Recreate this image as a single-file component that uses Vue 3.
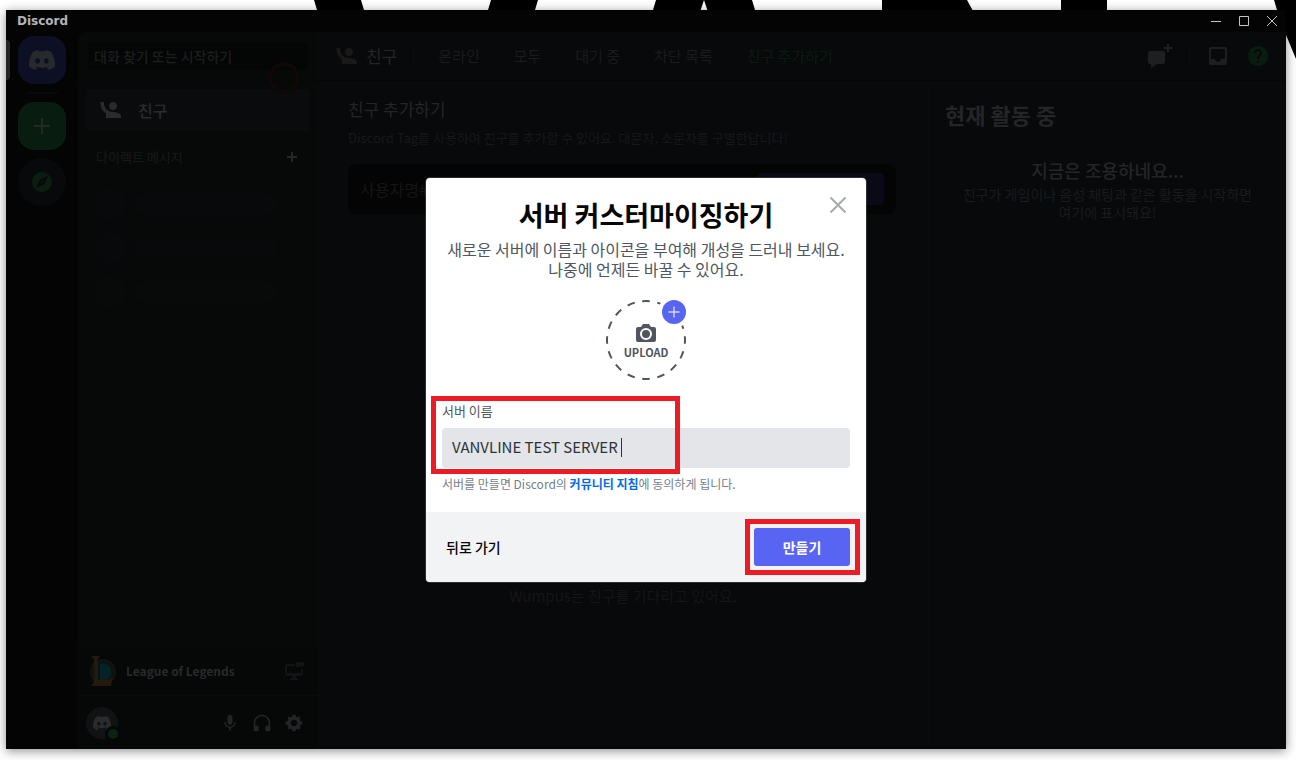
<template>
  <div class="desktop">
    <svg class="backdrop" viewBox="0 0 1296 60" preserveAspectRatio="none" aria-hidden="true">
      <path d="M314 0H361L379 60H332ZM491 0H538L520 60H473ZM656 0H752L770 60H724L704 0L684 60H638ZM882 0H967L1000 60H882ZM1061 0H1107V60H1061ZM1274 0H1296V59L1286 35L1277 10Z" />
    </svg>

    <div class="window">
      <header class="titlebar">
        <span class="wordmark">Discord</span>
        <div class="win-btns">
          <button aria-label="최소화"><svg viewBox="0 0 12 12"><path d="M1 6.5H11" /></svg></button>
          <button aria-label="최대화"><svg viewBox="0 0 12 12"><path d="M1.5 1.5H10.5V10.5H1.5Z" /></svg></button>
          <button aria-label="닫기"><svg viewBox="0 0 12 12"><path d="M1 1L11 11M11 1L1 11" /></svg></button>
        </div>
      </header>

      <div class="body">
        <nav class="rail">
          <button class="guild home" aria-label="홈">
            <svg width="28" height="20" viewBox="0 0 28 20"><path :d="icons.logo" /></svg>
          </button>
          <div class="rail-line"></div>
          <button class="guild add" aria-label="서버 추가하기">
            <svg width="24" height="24" viewBox="0 0 24 24"><path d="M11 4H13V11H20V13H13V20H11V13H4V11H11Z" /></svg>
          </button>
          <button class="guild explore" aria-label="공개 서버 살펴보기">
            <svg width="24" height="24" viewBox="0 0 24 24"><path :d="icons.compass" /></svg>
          </button>
        </nav>

        <aside class="sidebar">
          <div class="search-wrap">
            <button class="search">대화 찾기 또는 시작하기</button>
            <i class="click-ring"></i>
          </div>
          <div class="dm">
            <a class="friends-link" href="#">
              <svg width="24" height="24" viewBox="0 0 24 24"><path transform="translate(2 4)" :d="icons.friends" /></svg>
              친구
            </a>
            <div class="dm-head">
              <span>다이렉트 메시지</span>
              <button aria-label="DM 생성"><svg width="12" height="12" viewBox="0 0 12 12"><path d="M5 1H7V5H11V7H7V11H5V7H1V5H5Z" /></svg></button>
            </div>
            <div v-for="n in 3" :key="n" class="ghost" :class="'g' + n"><i></i><b></b></div>
          </div>
          <div class="activity">
            <svg class="lol" width="32" height="32" viewBox="0 0 32 32">
              <circle cx="17" cy="17" r="12" fill="#04161a" stroke="#17130c" stroke-width="2" />
              <path d="M14 9C20 8 25 11 25 17C25 21 23 24 20 25H14Z" fill="#052326" />
              <path d="M5 1H14L12 4V25H22L27 22L25 31H5L8 27V4Z" fill="#24190b" />
            </svg>
            <strong>League of Legends</strong>
            <button aria-label="화면 공유">
              <svg width="20" height="20" viewBox="0 0 20 20"><path d="M3 3H11V5H3V12H17V8H19V13A2 2 0 0 1 17 15H12V17H14V19H6V17H8V15H3A2 2 0 0 1 1 13V5A2 2 0 0 1 3 3ZM13 1H17A1 1 0 0 1 18 2L20 1V6L18 5A1 1 0 0 1 17 6H13A1 1 0 0 1 12 5V2A1 1 0 0 1 13 1Z" /></svg>
            </button>
          </div>
          <div class="user">
            <div class="avatar">
              <svg width="20" height="14" viewBox="0 0 28 20"><path :d="icons.logo" /></svg>
              <i class="status"></i>
            </div>
            <button aria-label="음소거"><svg width="20" height="20" viewBox="0 0 24 24"><path :d="icons.mic" /></svg></button>
            <button aria-label="헤드셋 음소거"><svg width="20" height="20" viewBox="0 0 24 24"><path :d="icons.headset" /></svg></button>
            <button aria-label="사용자 설정"><svg width="20" height="20" viewBox="0 0 24 24"><path :d="icons.gear" /></svg></button>
          </div>
        </aside>

        <section class="content">
          <div class="toolbar">
            <svg class="tool-icon" width="24" height="24" viewBox="0 0 24 24"><path transform="translate(2 4)" :d="icons.friends" /></svg>
            <h1>친구</h1>
            <i class="vline"></i>
            <div class="tabs">
              <button v-for="t in tabs" :key="t" :class="{ green: t === '친구 추가하기' }">{{ t }}</button>
            </div>
            <div class="tools">
              <button aria-label="그룹 DM 생성"><svg width="26" height="24" viewBox="0 0 26 24"><path d="M3 7H16A2 2 0 0 1 18 9V18A2 2 0 0 1 16 20H10L4 24V20H3A2 2 0 0 1 1 18V9A2 2 0 0 1 3 7ZM20 0H22V3H25V5H22V8H20V5H17V3H20Z" /></svg></button>
              <i class="vline"></i>
              <button aria-label="받은 편지함"><svg width="24" height="24" viewBox="0 0 24 24"><path :d="icons.inbox" /></svg></button>
              <button class="help" aria-label="도움말"><svg width="24" height="24" viewBox="0 0 24 24"><path :d="icons.help" /></svg></button>
            </div>
          </div>

          <div class="columns">
            <main class="people">
              <div class="add-friend">
                <h2>친구 추가하기</h2>
                <p>Discord Tag를 사용하여 친구를 추가할 수 있어요. 대문자, 소문자를 구별한답니다!</p>
                <div class="add-box">
                  <input type="text" placeholder="사용자명#0000" aria-label="사용자명" />
                  <button aria-label="친구 요청 보내기"></button>
                </div>
              </div>
              <div class="empty">
                <p>Wumpus는 친구를 기다리고 있어요.</p>
              </div>
            </main>
            <aside class="now">
              <h2>현재 활동 중</h2>
              <h3>지금은 조용하네요...</h3>
              <p>친구가 게임이나 음성 채팅과 같은 활동을 시작하면 여기에 표시돼요!</p>
            </aside>
          </div>
        </section>
      </div>

      <div class="layer">
        <form class="modal" role="dialog" aria-labelledby="modal-title" @submit.prevent>
          <button type="button" class="close" aria-label="닫기">
            <svg width="24" height="24" viewBox="0 0 24 24"><path d="M4.5 4.5L19.5 19.5M19.5 4.5L4.5 19.5" /></svg>
          </button>
          <div class="modal-body">
            <h2 id="modal-title">서버 커스터마이징하기</h2>
            <p class="desc">새로운 서버에 이름과 아이콘을 부여해 개성을 드러내 보세요.<br />나중에 언제든 바꿀 수 있어요.</p>
            <button type="button" class="upload">
              <svg class="ring" width="80" height="80" viewBox="0 0 80 80">
                <circle cx="40" cy="40" r="39" pathLength="160" fill="none" stroke="#4f5660" stroke-width="2" stroke-dasharray="5 5" stroke-dashoffset="2.5" />
                <circle cx="68" cy="12" r="16" fill="#fff" />
                <circle cx="68" cy="12" r="12" fill="#5865f2" />
                <path d="M68 6.5V17.5M62.5 12H73.5" stroke="#d5d8fc" stroke-width="1.4" />
              </svg>
              <svg width="20" height="18" viewBox="0 0 20 18">
                <path fill="#4f5660" fill-rule="evenodd" d="M7 0H13L15 3H18A2 2 0 0 1 20 5V16A2 2 0 0 1 18 18H2A2 2 0 0 1 0 16V5A2 2 0 0 1 2 3H5ZM10 4A6 6 0 1 0 10 16A6 6 0 1 0 10 4ZM10 6A4 4 0 1 1 10 14A4 4 0 1 1 10 6Z" />
              </svg>
              <span>UPLOAD</span>
            </button>
            <div class="field">
              <label for="server-name">서버 이름</label>
              <input id="server-name" v-model="serverName" type="text" />
              <i class="caret"></i>
              <i class="mark mark-field"></i>
            </div>
            <p class="hint">서버를 만들면 Discord의 <a href="#">커뮤니티 지침</a>에 동의하게 됩니다.</p>
          </div>
          <footer class="modal-foot">
            <button type="button" class="back">뒤로 가기</button>
            <div class="submit-wrap">
              <button type="submit" class="submit">만들기</button>
              <i class="mark mark-submit"></i>
            </div>
          </footer>
        </form>
      </div>
    </div>
  </div>
</template>

<script setup>
import { ref } from 'vue'

const serverName = ref('VANVLINE TEST SERVER')
const tabs = ['온라인', '모두', '대기 중', '차단 목록', '친구 추가하기']

const icons = {
  logo: 'M23.0212 1.67671C21.3107 0.879656 19.5079 0.318797 17.6584 0C17.4062 0.461742 17.1749 0.934541 16.9708 1.4184C15.003 1.12145 12.9974 1.12145 11.0283 1.4184C10.819 0.934541 10.589 0.461744 10.3368 0.00546311C8.48074 0.324393 6.67795 0.885118 4.96746 1.68231C1.56727 6.77853 0.649666 11.7538 1.11108 16.652C3.10102 18.1418 5.3262 19.2743 7.69177 20C8.22338 19.2743 8.69519 18.4993 9.09812 17.691C8.32996 17.3997 7.58522 17.0424 6.87684 16.6135C7.06531 16.4762 7.24726 16.3387 7.42403 16.1847C11.5911 18.1749 16.408 18.1749 20.5763 16.1847C20.7531 16.3332 20.9351 16.4762 21.1171 16.6135C20.41 17.0369 19.6639 17.3997 18.897 17.691C19.3052 18.4993 19.7718 19.2689 20.3021 19.9945C22.6677 19.2689 24.8929 18.1364 26.8828 16.6466H26.8893C27.43 10.9731 25.9665 6.04728 23.0212 1.67671ZM9.68041 13.6383C8.39754 13.6383 7.34085 12.4453 7.34085 10.994C7.34085 9.54272 8.37155 8.34973 9.68041 8.34973C10.9893 8.34973 12.0395 9.54272 12.0187 10.994C12.0187 12.4453 10.9828 13.6383 9.68041 13.6383ZM18.3161 13.6383C17.0333 13.6383 15.9765 12.4453 15.9765 10.994C15.9765 9.54272 17.0124 8.34973 18.3161 8.34973C19.6184 8.34973 20.6751 9.54272 20.6543 10.994C20.6543 12.4453 19.6184 13.6383 18.3161 13.6383Z',
  friends: 'M0.5 0V1.5C0.5 5.65 2.71 9.28 6 11.3V16H21V14C21 11.34 15.67 10 13 10H12.75C8 10 4 6 4 1.5V0ZM13 0C10.79 0 9 1.79 9 4C9 6.21 10.79 8 13 8C15.21 8 17 6.21 17 4C17 1.79 15.21 0 13 0Z',
  compass: 'M12 10.9c-.61 0-1.1.49-1.1 1.1s.49 1.1 1.1 1.1c.61 0 1.1-.49 1.1-1.1s-.49-1.1-1.1-1.1zM12 2C6.48 2 2 6.48 2 12s4.48 10 10 10 10-4.48 10-10S17.52 2 12 2zm2.19 12.19L6 18l3.81-8.19L18 6l-3.81 8.19z',
  mic: 'M14.99 11C14.99 12.66 13.66 14 12 14C10.34 14 9 12.66 9 11V5C9 3.34 10.34 2 12 2C13.66 2 15 3.34 15 5L14.99 11ZM12 16.1C14.76 16.1 17.3 14 17.3 11H19C19 14.42 16.28 17.24 13 17.72V21H11V17.72C7.72 17.23 5 14.41 5 11H6.7C6.7 14 9.24 16.1 12 16.1Z',
  headset: 'M12 2C6.486 2 2 6.488 2 12V20C2 21.107 2.895 22 4 22H6C7.104 22 8 21.107 8 20V17C8 15.899 7.104 15 6 15H4V12C4 7.591 7.589 4 12 4C16.411 4 20 7.591 20 12V15H18C16.896 15 16 15.899 16 17V20C16 21.107 16.896 22 18 22H20C21.104 22 22 21.107 22 20V12C22 6.488 17.514 2 12 2Z',
  gear: 'M19.738 10H22V14H19.739C19.498 14.931 19.1 15.798 18.565 16.564L20 18L18 20L16.565 18.564C15.797 19.099 14.932 19.498 14 19.738V22H10V19.738C9.069 19.498 8.203 19.099 7.436 18.564L6 20L4 18L5.436 16.564C4.901 15.799 4.502 14.932 4.262 14H2V10H4.262C4.502 9.068 4.9 8.202 5.436 7.436L4 6L6 4L7.436 5.436C8.202 4.9 9.068 4.502 10 4.262V2H14V4.261C14.932 4.502 15.797 4.9 16.565 5.435L18 3.999L20 5.999L18.564 7.436C19.099 8.202 19.498 9.069 19.738 10ZM12 16C14.209 16 16 14.209 16 12C16 9.791 14.209 8 12 8C9.791 8 8 9.791 8 12C8 14.209 9.791 16 12 16Z',
  inbox: 'M19 3H4.99C3.88 3 3.01 3.89 3.01 5L3 19C3 20.1 3.88 21 4.99 21H19C20.1 21 21 20.1 21 19V5C21 3.89 20.1 3 19 3ZM19 15H15C15 16.66 13.65 18 12 18C10.35 18 9 16.66 9 15H4.99V5H19V15Z',
  help: 'M12 2C6.48 2 2 6.48 2 12s4.48 10 10 10 10-4.48 10-10S17.52 2 12 2zm1 17h-2v-2h2v2zm2.07-7.75l-.9.92C13.45 12.9 13 13.5 13 15h-2v-.5c0-1.1.45-2.1 1.17-2.83l1.24-1.26c.37-.36.59-.86.59-1.41 0-1.1-.9-2-2-2s-2 .9-2 2H8c0-2.21 1.79-4 4-4s4 1.79 4 4c0 .88-.36 1.68-.93 2.25z'
}
</script>

<style>
body {
  margin: 0;
  background: #fff;
}
</style>

<style scoped>
.desktop {
  position: relative;
  box-sizing: border-box;
  min-height: 100vh;
  padding: 10px 10px 11px 6px;
  display: flex;
  overflow: hidden;
  font-family: "Noto Sans CJK KR", sans-serif;
  font-size: 16px;
  line-height: 20px;
  color: #242526;
}
.desktop * {
  box-sizing: border-box;
}
h1, h2, h3, p {
  margin: 0;
  font-weight: 400;
}
button {
  border: 0;
  padding: 0;
  background: none;
  font: inherit;
  color: inherit;
  cursor: pointer;
}
input {
  border: 0;
  font: inherit;
  outline: none;
}
svg {
  display: block;
  fill: currentColor;
}
.backdrop {
  position: absolute;
  top: 0;
  left: 0;
  width: 100%;
  height: 60px;
  fill: #000;
}
.window {
  position: relative;
  flex: 1;
  min-width: 0;
  display: flex;
  flex-direction: column;
  background: #040404;
  box-shadow: 0 2px 10px rgba(0, 0, 0, 0.45);
}

.titlebar {
  height: 22px;
  display: flex;
  align-items: center;
  justify-content: space-between;
  padding: 0 8px 0 11px;
  background: #040404;
  color: #b4b5b7;
}
.wordmark {
  font: 700 12px/22px "DejaVu Sans", sans-serif;
}
.win-btns {
  display: flex;
  gap: 16px;
}
.win-btns svg {
  width: 12px;
  height: 12px;
  fill: none;
  stroke: #c4c4c4;
}

.body {
  flex: 1;
  display: flex;
  min-height: 0;
}
.rail {
  width: 72px;
  display: flex;
  flex-direction: column;
  align-items: center;
  gap: 8px;
  padding-top: 4px;
}
.guild {
  width: 48px;
  height: 48px;
  border-radius: 16px;
  display: flex;
  align-items: center;
  justify-content: center;
}
.home {
  position: relative;
  background: #0d0f24;
  color: #28292b;
}
.home::before {
  content: "";
  position: absolute;
  left: -12px;
  top: 4px;
  width: 4px;
  height: 40px;
  border-radius: 0 4px 4px 0;
  background: #262626;
}
.rail-line {
  width: 32px;
  height: 2px;
  background: #08090a;
}
.add {
  background: #091c10;
  color: #262827;
}
.explore {
  border-radius: 24px;
  background: #08090b;
  color: #091e11;
}

.sidebar {
  width: 240px;
  display: flex;
  flex-direction: column;
  background: #070908;
  border-radius: 8px 0 0 0;
}
.search-wrap {
  position: relative;
  height: 49px;
  padding: 10px;
  border-bottom: 1px solid #050606;
}
.search {
  width: 100%;
  height: 28px;
  padding: 0 6px;
  border-radius: 4px;
  background: #040505;
  color: #1d1e1f;
  font-size: 14px;
  font-weight: 500;
  line-height: 26px;
  text-align: left;
}
.click-ring {
  position: absolute;
  left: 190px;
  top: 30px;
  width: 32px;
  height: 32px;
  border: 4px solid #0e0806;
  border-radius: 50%;
}
.dm {
  flex: 1;
  padding: 8px;
}
.friends-link {
  height: 42px;
  padding: 0 12px;
  display: flex;
  align-items: center;
  gap: 16px;
  border-radius: 4px;
  background: #0a0b0d;
  color: #2a2b2c;
  font-weight: 500;
  text-decoration: none;
}
.dm-head {
  display: flex;
  align-items: center;
  justify-content: space-between;
  padding: 16px 12px 15px 10px;
  color: #18191a;
  font-size: 13px;
}
.dm-head button {
  color: #242526;
}
.ghost {
  height: 44px;
  padding: 0 8px;
  display: flex;
  align-items: center;
  gap: 8px;
}
.ghost i {
  width: 32px;
  height: 32px;
  border-radius: 50%;
  background: #08090b;
}
.ghost b {
  width: 144px;
  height: 20px;
  border-radius: 10px;
  background: #08090b;
}
.g3 i,
.g3 b {
  background: #080a09;
}
.activity {
  height: 49px;
  padding: 0 14px 0 8px;
  display: flex;
  align-items: center;
  gap: 8px;
  background: #060707;
  border-bottom: 1px solid #0a0b0b;
}
.activity strong {
  flex: 1;
  color: #28292a;
  font-size: 12px;
}
.activity button {
  color: #121314;
}
.user {
  height: 53px;
  padding: 0 8px;
  display: flex;
  align-items: center;
  background: #060707;
}
.user button {
  width: 32px;
  height: 32px;
  display: flex;
  align-items: center;
  justify-content: center;
  color: #232425;
}
.avatar {
  position: relative;
  width: 32px;
  height: 32px;
  margin-right: auto;
  border-radius: 50%;
  background: #111214;
  color: #2a2b2c;
  display: flex;
  align-items: center;
  justify-content: center;
}
.status {
  position: absolute;
  right: -3px;
  bottom: -3px;
  width: 16px;
  height: 16px;
  border: 3px solid #060707;
  border-radius: 50%;
  background: #0a2412;
}

.content {
  flex: 1;
  min-width: 0;
  display: flex;
  flex-direction: column;
  background: #08090b;
}
.toolbar {
  height: 49px;
  padding: 0 16px;
  display: flex;
  align-items: center;
  border-bottom: 1px solid #050607;
}
.tool-icon {
  color: #19191a;
}
.toolbar h1 {
  margin-left: 8px;
  font-size: 17px;
}
.vline {
  width: 1px;
  height: 24px;
  margin: 0 16px;
  background: #0c0d0f;
}
.tabs {
  display: flex;
  gap: 34px;
  margin-left: 8px;
  color: #1a1b1c;
  font-size: 15px;
}
.green,
.help {
  color: #091c10;
}
.tools {
  display: flex;
  align-items: center;
  margin-left: auto;
  color: #1e1f20;
}
.help {
  margin-left: 16px;
}
.columns {
  flex: 1;
  display: flex;
}
.people {
  flex: 1;
  display: flex;
  flex-direction: column;
}
.add-friend {
  padding: 18px 32px 20px 30px;
  border-bottom: 1px solid #0a0b0d;
}
.add-friend h2 {
  font-size: 17px;
}
.add-friend p {
  margin-top: 9px;
  color: #171819;
  font-size: 13px;
}
.add-box {
  height: 50px;
  margin-top: 16px;
  padding: 0 12px;
  display: flex;
  align-items: center;
  border-radius: 8px;
  background: #040404;
}
.add-box input {
  flex: 1;
  min-width: 0;
  padding: 0;
  background: none;
}
.add-box input::placeholder {
  color: #151616;
  opacity: 1;
}
.add-box button {
  width: 126px;
  height: 32px;
  border-radius: 4px;
  background: #090a16;
}
.empty {
  flex: 1;
  display: flex;
  align-items: center;
  justify-content: center;
}
.empty p {
  padding-top: 208px;
  color: #151616;
  font-size: 15px;
}
.now {
  width: 358px;
  padding: 23px 16px;
  border-left: 1px solid #0a0b0d;
  text-align: center;
}
.now h2 {
  font-size: 22px;
  font-weight: 700;
  text-align: left;
}
.now h3 {
  margin-top: 36px;
  font-size: 18px;
  font-weight: 500;
}
.now p {
  margin-top: 5px;
  padding: 0 16px;
  color: #1a1b1c;
  font-size: 14px;
  line-height: 18px;
  word-break: keep-all;
}

.layer {
  position: absolute;
  inset: 0;
  display: flex;
  align-items: center;
  justify-content: center;
}
.modal {
  position: relative;
  width: 440px;
  border-radius: 4px;
  background: #fff;
  box-shadow: 0 0 0 1px rgba(79, 84, 92, 0.5);
}
.modal-body {
  padding: 23px 16px 20px;
  text-align: center;
}
.close {
  position: absolute;
  top: 15px;
  right: 16px;
}
.close svg {
  fill: none;
  stroke: #a7aab0;
  stroke-width: 2;
}
.modal h2 {
  color: #060607;
  font-size: 27px;
  font-weight: 700;
  line-height: 28px;
}
.desc {
  margin-top: 10px;
  color: #4f5660;
}
.upload {
  position: relative;
  width: 80px;
  height: 80px;
  margin: 21px auto 0;
  padding-top: 4px;
  display: flex;
  flex-direction: column;
  align-items: center;
  justify-content: center;
  gap: 2px;
  color: #4f5660;
  font-size: 11px;
  font-weight: 700;
  line-height: 16px;
}
.ring {
  position: absolute;
  inset: 0;
}
.field {
  position: relative;
  margin-top: 23px;
  text-align: left;
}
.field label {
  display: block;
  color: #4f5660;
  font-size: 13px;
  line-height: 16px;
}
.field input {
  width: 100%;
  height: 40px;
  margin-top: 9px;
  padding: 0 10px 2px;
  display: block;
  border-radius: 4px;
  background: #e3e5e8;
  color: #2e3338;
  font-size: 15px;
}
.caret {
  position: absolute;
  left: 179px;
  top: 35px;
  width: 1px;
  height: 19px;
  background: #2e3338;
}
.mark {
  position: absolute;
  border: 5px solid #ed1c24;
  pointer-events: none;
}
.mark-field {
  left: -11px;
  top: -7px;
  width: 249px;
  height: 78px;
}
.hint {
  margin-top: 8px;
  color: #747f8d;
  font-size: 12px;
  line-height: 16px;
  text-align: left;
}
.hint a {
  color: #006ce7;
  font-weight: 700;
  text-decoration: none;
}
.modal-foot {
  height: 70px;
  padding: 0 16px 0 20px;
  display: flex;
  align-items: center;
  justify-content: space-between;
  border-radius: 0 0 4px 4px;
  background: #f2f3f5;
  font-size: 14px;
  font-weight: 500;
}
.back {
  color: #060607;
}
.submit-wrap {
  position: relative;
}
.submit {
  width: 96px;
  height: 38px;
  display: block;
  border-radius: 3px;
  background: #5865f2;
  color: #fff;
  font-weight: 700;
}
.mark-submit {
  inset: -9px -10px -9px -9px;
}
</style>
